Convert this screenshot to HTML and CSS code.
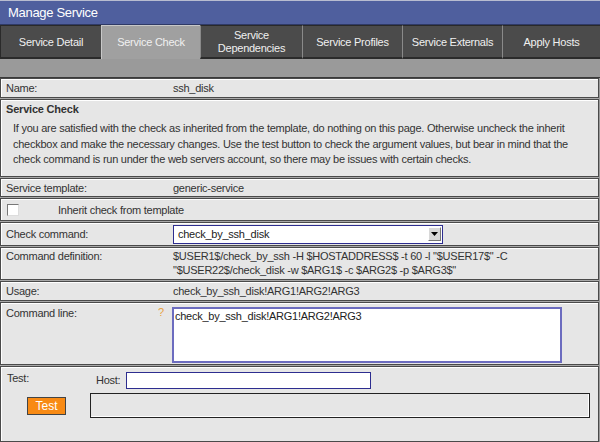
FILE: index.html
```html
<!DOCTYPE html>
<html>
<head>
<meta charset="utf-8">
<link rel="stylesheet" href="styles.css">
</head>
<body>
<div class="page">
  <div class="title">Manage Service</div>
  <div class="tabs">
    <div class="tab">Service Detail</div>
    <div class="tab active">Service Check</div>
    <div class="tab">Service<br>Dependencies</div>
    <div class="tab">Service Profiles</div>
    <div class="tab">Service Externals</div>
    <div class="tab">Apply Hosts</div>
  </div>
  <div class="band"></div>
  <div class="rows">
    <div class="row r-name"><span class="label">Name:</span><span class="value">ssh_disk</span></div>
    <div class="row section">
      <div class="heading">Service Check</div>
      <p class="desc">If you are satisfied with the check as inherited from the template, do nothing on this page. Otherwise uncheck the inherit<br>checkbox and make the necessary changes. Use the test button to check the argument values, but bear in mind that the<br>check command is run under the web servers account, so there may be issues with certain checks.</p>
    </div>
    <div class="row r-template"><span class="label">Service template:</span><span class="value">generic-service</span></div>
    <div class="row r-inherit"><span class="checkbox"></span><span class="inherit-text">Inherit check from template</span></div>
    <div class="row r-command"><span class="label">Check command:</span>
      <div class="select"><span class="select-text">check_by_ssh_disk</span><span class="select-btn"><svg width="7" height="4" viewBox="0 0 7 4"><path d="M0 0h7L3.5 4z" fill="#000"/></svg></span></div>
    </div>
    <div class="row r-def"><span class="label">Command definition:</span><span class="value">$USER1$/check_by_ssh -H $HOSTADDRESS$ -t 60 -l "$USER17$" -C<br>"$USER22$/check_disk -w $ARG1$ -c $ARG2$ -p $ARG3$"</span></div>
    <div class="row r-usage"><span class="label">Usage:</span><span class="value">check_by_ssh_disk!ARG1!ARG2!ARG3</span></div>
    <div class="row r-cmdline"><span class="label">Command line:</span><span class="help">?</span>
      <div class="textarea">check_by_ssh_disk!ARG1!ARG2!ARG3</div>
    </div>
    <div class="row r-test">
      <div class="test-top"><span class="test-label">Test:</span><span class="host-label">Host:</span><span class="host-input"></span></div>
      <div class="test-bottom"><span class="test-btn">Test</span><div class="output"></div></div>
    </div>
  </div>
</div>
</body>
</html>
```

FILE: styles.css
```css
html, body {
  margin: 0;
  padding: 0;
  background: #e6e6e6;
}
body {
  font-family: "Liberation Sans", Arial, sans-serif;
  font-size: 11px;
  letter-spacing: -0.25px;
  color: #333;
}
.page {
  width: 600px;
  height: 442px;
  overflow: hidden;
  background: #9a9a9a;
}
.title {
  height: 23px;
  border-top: 1px solid #b8bcd0;
  border-bottom: 1px solid #2f3a66;
  background: #4f5f9e;
  color: #fff;
  font-size: 13px;
  letter-spacing: -0.3px;
  line-height: 23px;
  padding-left: 8px;
}
.tabs {
  display: grid;
  grid-template-columns: 101px 99px 102px 100px 100px 98px;
  height: 34px;
  background: #9a9a9a;
}
.tab {
  background: #4b4b4b;
  color: #f0f0f0;
  font-size: 11px;
  line-height: 13px;
  display: flex;
  align-items: center;
  justify-content: center;
  text-align: center;
  border-left: 1px solid #8a8a8a;
  border-top: 1px solid #2a2a2a;
  border-bottom: 2px solid #2a2a2a;
  padding-top: 1px;
}
.tab:first-child { border-left: 1px solid #2a2a2a; }
.tab.active {
  background: #a0a0a0;
  border-top: 1px solid #c8c8c8;
  border-left: 1px solid #c8c8c8;
  border-bottom: none;
  padding-bottom: 2px;
}
.band {
  height: 18px;
  background: #9a9a9a;
  border-bottom: 1px solid #3a3a3a;
}
.rows {
  display: flex;
  flex-direction: column;
  gap: 1px;
  background: #a8a8a8;
  width: 599px;
}
.row {
  background: #e6e6e6;
  border: 1px solid #4a4a4a;
  box-shadow: inset 1px 1px 0 #fff;
  display: flex;
  align-items: center;
  box-sizing: border-box;
  padding-left: 5px;
  flex: none;
}
.label {
  width: 167px;
  flex: none;
}
.value {
  flex: 1;
  line-height: 14px;
}
.r-name { height: 20px; }
.section {
  display: block;
  height: 78px;
  padding: 2px 5px 0 5px;
}
.heading {
  font-weight: bold;
  line-height: 14px;
  letter-spacing: -0.2px;
}
.desc {
  margin: 5px 0 0 7px;
  line-height: 15.5px;
  white-space: nowrap;
}
.r-template { height: 19px; }
.r-inherit { height: 23px; }
.checkbox {
  width: 10px;
  height: 10px;
  border: 1px solid #777;
  border-right-color: #ddd;
  border-bottom-color: #ddd;
  background: #fff;
  margin-left: 1px;
  margin-right: 39px;
}
.r-command { height: 24px; }
.select {
  width: 270px;
  height: 19px;
  box-sizing: border-box;
  border: 1px solid #2d2d8f;
  background: #fff;
  display: flex;
  align-items: center;
  justify-content: space-between;
}
.select-text {
  padding-left: 4px;
  color: #222;
}
.select-btn {
  width: 13px;
  height: 14px;
  margin-right: 1px;
  background: #d8d8d8;
  border: 1px solid #fff;
  border-right-color: #777;
  border-bottom-color: #777;
  box-sizing: border-box;
  display: flex;
  align-items: center;
  justify-content: center;
}
.r-def {
  height: 33px;
  align-items: flex-start;
  padding-top: 2px;
}
.r-def .label,
.r-def .value { line-height: 13.5px; }
.r-usage { height: 20px; }
.r-cmdline {
  height: 63px;
  align-items: flex-start;
  padding-top: 3px;
}
.r-cmdline .label {
  width: 152px;
  line-height: 14px;
}
.help {
  color: #e8a040;
  width: 14px;
  line-height: 14px;
  margin-top: -1px;
}
.textarea {
  width: 390px;
  height: 56px;
  box-sizing: border-box;
  border: 2px solid #6c6cbf;
  background: #fff;
  padding: 1px 1px;
  margin-top: 1px;
  color: #222;
  line-height: 12px;
}
.r-test {
  height: 76px;
  display: block;
  padding: 4px 0 0 6px;
}
.test-top {
  display: flex;
  align-items: flex-start;
  height: 18px;
}
.test-label {
  width: 89px;
  line-height: 13px;
  margin-top: 1px;
}
.host-label {
  width: 30px;
  line-height: 13px;
  margin-top: 3px;
}
.host-input {
  width: 245px;
  height: 17px;
  margin-top: 1px;
  box-sizing: border-box;
  border: 1px solid #2d2d8f;
  background: #fff;
}
.test-bottom {
  display: flex;
  align-items: flex-start;
  margin-top: 4px;
}
.test-btn {
  background: #f88a14;
  color: #fff;
  font-size: 12px;
  letter-spacing: 0;
  border: 1px solid #444;
  width: 37px;
  height: 16px;
  line-height: 16px;
  text-align: center;
  margin: 4px 24px 0 20px;
}
.output {
  width: 500px;
  height: 25px;
  box-sizing: border-box;
  border: 1px solid #222;
  box-shadow: inset -1px -1px 0 #fff;
  background: #e6e6e6;
}
```
